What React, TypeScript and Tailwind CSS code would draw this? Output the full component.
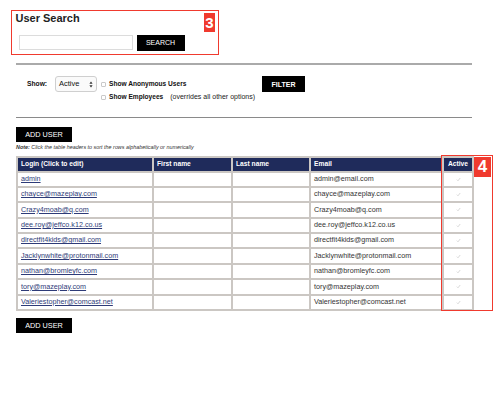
import React from 'react';

const users = [
  { login: 'admin', email: 'admin@email.com' },
  { login: 'chayce@mazeplay.com', email: 'chayce@mazeplay.com' },
  { login: 'Crazy4moab@q.com', email: 'Crazy4moab@q.com' },
  { login: 'dee.roy@jeffco.k12.co.us', email: 'dee.roy@jeffco.k12.co.us' },
  { login: 'directfit4kids@gmail.com', email: 'directfit4kids@gmail.com' },
  { login: 'Jacklynwhite@protonmail.com', email: 'Jacklynwhite@protonmail.com' },
  { login: 'nathan@bromleyfc.com', email: 'nathan@bromleyfc.com' },
  { login: 'tory@mazeplay.com', email: 'tory@mazeplay.com' },
  { login: 'Valeriestopher@comcast.net', email: 'Valeriestopher@comcast.net' },
];

const Checkbox: React.FC = () => (
  <span className="inline-block w-[5px] h-[5px] rounded-[1px] border border-[#c9c9c9] bg-white" />
);

const Tick: React.FC = () => (
  <svg width="5" height="5" viewBox="0 0 5 5" className="mx-auto block">
    <polyline points="0.8,2.6 2,3.8 4.2,1" fill="none" stroke="#cfcfcf" strokeWidth="0.8" />
  </svg>
);

const Label: React.FC<{ n: string; className: string }> = ({ n, className }) => (
  <span className={`absolute flex items-center justify-center bg-[#f03a2e] text-white font-bold leading-none ${className}`}>
    {n}
  </span>
);

export default function App() {
  return (
    <div className="relative w-[500px] h-[401px] bg-white overflow-hidden font-['Liberation_Sans',Arial,sans-serif] text-[#111]">
      {/* search */}
      <div className="pt-[10px] pl-[11px]">
        <div className="relative w-[208px] h-[45px] border-[1.5px] border-[#f03a2e]">
          <h1 className="pl-[3.5px] pt-[1px] text-[11px] leading-[13px] font-bold text-[#222]">User Search</h1>
          <div className="flex items-center gap-[4px] pl-[6.5px] mt-[9.5px]">
            <input className="w-[114px] h-[15px] border border-[#dcdcdc] bg-white outline-none" />
            <button className="w-[48px] h-[16px] bg-black text-white text-[7px] leading-none">SEARCH</button>
          </div>
          <Label n="3" className="right-[3px] top-[2px] w-[11px] h-[19px] text-[15px]" />
        </div>
      </div>

      <div className="ml-[16px] mt-[8px] w-[456px] h-[2px] bg-[#aaaaaa]" />

      {/* filters */}
      <div className="ml-[27px] mt-[11px] flex items-start">
        <span className="w-[28px] h-[16px] flex items-center text-[6.7px] font-bold">Show:</span>
        <div className="w-[42px] h-[16px] flex items-center justify-between px-[3px] rounded-[3px] border border-[#cfcfcf] bg-[#fafafa] text-[7.5px]">
          <span>Active</span>
          <svg width="4" height="7" viewBox="0 0 4 7">
            <polygon points="2,0.5 3.6,2.8 0.4,2.8" fill="#333" />
            <polygon points="2,6.5 3.6,4.2 0.4,4.2" fill="#333" />
          </svg>
        </div>
        <div className="ml-[4px] w-[161px] flex flex-col">
          <div className="h-[16px] flex items-center gap-[3px] text-[6.6px] font-bold">
            <Checkbox />
            <span>Show Anonymous Users</span>
          </div>
          <div className="h-[10px] flex items-center gap-[3px] text-[6.6px]">
            <Checkbox />
            <span className="font-bold">Show Employees</span>
            <span className="ml-[4px] text-[7px] text-[#222]">(overrides all other options)</span>
          </div>
        </div>
        <button className="w-[43px] h-[16px] bg-black text-white text-[7px] font-bold leading-none">FILTER</button>
      </div>

      <div className="ml-[16px] mt-[15px] w-[456px] h-px bg-[#8a8a8a]" />

      <button className="block ml-[16px] mt-[9px] w-[56px] h-[15px] bg-black text-white text-[7.3px] leading-none">ADD USER</button>
      <p className="ml-[16px] mt-[1.5px] text-[5.4px] leading-[6px] italic text-[#333]">
        <b>Note:</b> Click the table headers to sort the rows alphabetically or numerically
      </p>

      {/* table */}
      <div className="relative ml-[16px] mt-[6px] w-[456px]">
        <table className="w-[456px] table-fixed border-collapse">
          <colgroup>
            <col className="w-[136px]" />
            <col className="w-[79px]" />
            <col className="w-[78px]" />
            <col className="w-[133px]" />
            <col className="w-[30px]" />
          </colgroup>
          <thead>
            <tr className="h-[15px] bg-[#1f2b5b] text-white text-[6.7px] font-bold text-left">
              <th className="border-2 border-[#cbc7c3] pl-[3px] font-bold">Login (Click to edit)</th>
              <th className="border-2 border-[#cbc7c3] pl-[3px] font-bold">First name</th>
              <th className="border-2 border-[#cbc7c3] pl-[3px] font-bold">Last name</th>
              <th className="border-2 border-[#cbc7c3] pl-[3px] font-bold">Email</th>
              <th className="border-2 border-[#cbc7c3] text-center font-bold">Active</th>
            </tr>
          </thead>
          <tbody>
            {users.map((u) => (
              <tr key={u.login} className="h-[15.4px] text-[7.2px]">
                <td className="border-2 border-[#cbc7c3] pl-[3px]">
                  <a href="#" className="text-[#2e3b78] underline">{u.login}</a>
                </td>
                <td className="border-2 border-[#cbc7c3]" />
                <td className="border-2 border-[#cbc7c3]" />
                <td className="border-2 border-[#cbc7c3] pl-[3px] text-[#333]">{u.email}</td>
                <td className="border-2 border-[#cbc7c3]"><Tick /></td>
              </tr>
            ))}
          </tbody>
        </table>
        <div className="absolute left-[425px] top-[-1px] w-[52px] h-[156px] border-[1.5px] border-[#f03a2e]">
          <Label n="4" className="right-[1px] top-[1px] w-[17px] h-[20px] text-[17px]" />
        </div>
      </div>

      <button className="block ml-[16px] mt-[7px] w-[56px] h-[15px] bg-black text-white text-[7.3px] leading-none">ADD USER</button>
    </div>
  );
}
